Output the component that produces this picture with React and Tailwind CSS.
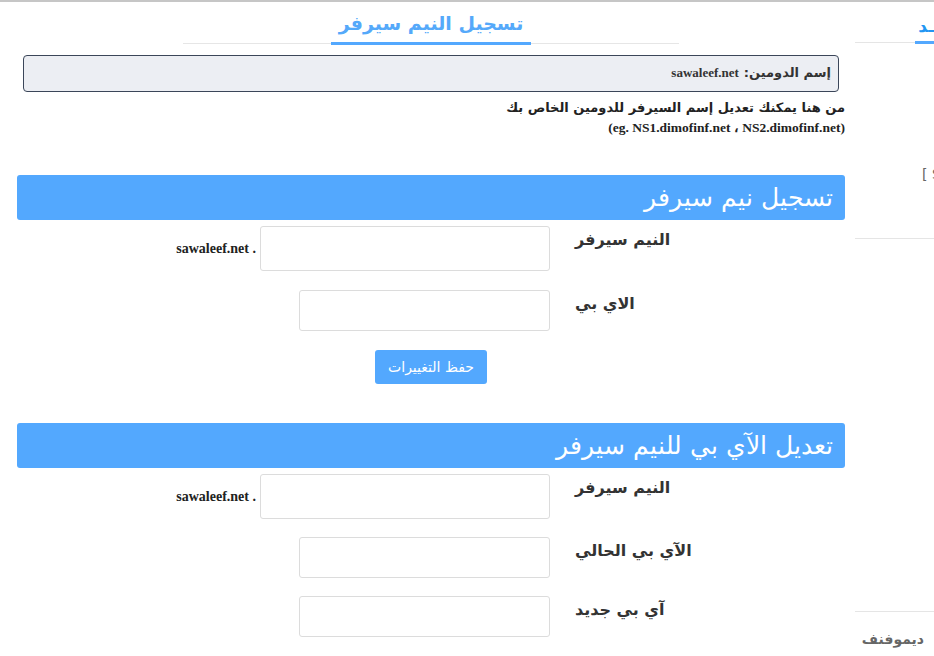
import React from "react";

const arabic = "font-['DejaVu_Sans',sans-serif]";
const serif = "font-['Liberation_Serif',serif]";

function SectionHeader({ title }) {
  return (
    <div className={`h-[45px] bg-[#53a8fe] rounded-[3px] flex items-center pr-[12px] text-white text-[25px] ${arabic} font-light`}>
      {title}
    </div>
  );
}

function Row({ label, wide, suffix, tall }) {
  return (
    <div className="flex items-start">
      <div className={`w-[270px] pt-[2px] text-left text-[16px] font-bold text-[#333] whitespace-nowrap ${arabic}`}>
        {label}
      </div>
      <div className="flex items-center mr-[25px]">
        <input
          type="text"
          className={`${wide ? "w-[290px]" : "w-[251px]"} ${tall ? "h-[45px]" : "h-[41px]"} border border-[#dcdcdc] rounded-[3px] bg-white`}
        />
        {suffix && (
          <span className={`mr-[4px] text-[14px] font-bold text-[#222] ${serif}`} dir="ltr">
            {suffix} .
          </span>
        )}
      </div>
    </div>
  );
}

function Sidebar() {
  return (
    <aside className="w-[79px] shrink-0 overflow-hidden flex flex-col" dir="ltr">
      <div className="h-[41px] border-b border-[#e5e5e5] relative pl-[60px] pt-[12px]">
        <span className={`block text-[17px] font-bold text-[#2196f3] ${arabic} whitespace-nowrap`} dir="rtl">
          ـد
        </span>
        <div className="absolute left-[60px] bottom-[-2px] w-[30px] h-[3px] bg-[#53a8fe]" />
      </div>
      <div className="h-[196px] border-b border-[#e5e5e5] pl-[67px] pt-[118px]">
        <span className={`text-[14px] text-[#666] ${arabic} whitespace-nowrap`}>[ S</span>
      </div>
      <div className="h-[373px] border-b border-[#e5e5e5]" />
      <div className={`pt-[17px] pr-[10px] text-right text-[14px] font-bold text-[#666] ${arabic}`} dir="rtl">
        ديموفنف
      </div>
    </aside>
  );
}

export default function App() {
  return (
    <div dir="rtl" className="w-[934px] h-[656px] overflow-hidden bg-white border-t-2 border-[#c6c6c6] flex">
      <Sidebar />
      <main className="w-[855px] shrink-0 pr-[10px] pl-[17px]">
        <div className="flex justify-center pt-[7px]">
          <div className="w-[496px] border-b border-[#e6e6e6] flex justify-center">
            <span className={`w-[200px] text-center border-b-[3px] border-[#53a8fe] -mb-[2px] pb-[4px] text-[19px] font-bold text-[#55a9fa] ${arabic}`}>
              تسجيل النيم سيرفر
            </span>
          </div>
        </div>

        <div className="mx-[6px] mt-[11px] h-[37px] border border-[#3b4659] rounded-[4px] bg-[#eceef3] flex items-center pr-[7px]">
          <span className={`text-[13px] font-bold text-[#333] ${arabic}`}>إسم الدومين: </span>
          <span className={`mr-[5px] text-[13px] font-bold text-[#333] ${serif}`}>sawaleef.net</span>
        </div>

        <div className={`mt-[6px] text-[13px] font-bold text-[#222] ${arabic}`}>
          من هنا يمكنك تعديل إسم السيرفر للدومين الخاص بك
        </div>
        <div className={`mt-[1px] text-[13.5px] font-bold text-[#222] ${serif}`}>
          (eg. NS1.dimofinf.net ، NS2.dimofinf.net)
        </div>

        <div className="mt-[37px]">
          <SectionHeader title="تسجيل نيم سيرفر" />
          <div className="mt-[6px] flex flex-col gap-[19px]">
            <Row label="النيم سيرفر" wide tall suffix="sawaleef.net" />
            <Row label="الاي بي" />
          </div>
          <div className="flex justify-center mt-[19px]">
            <button className={`w-[112px] h-[34px] bg-[#53a8fe] rounded-[3px] text-white text-[14px] ${arabic}`}>
              حفظ التغييرات
            </button>
          </div>
        </div>

        <div className="mt-[39px]">
          <SectionHeader title="تعديل الآي بي للنيم سيرفر" />
          <div className="mt-[6px] flex flex-col gap-[18px]">
            <Row label="النيم سيرفر" wide tall suffix="sawaleef.net" />
            <Row label="الآي بي الحالي" />
            <Row label="آي بي جديد" />
          </div>
        </div>
      </main>
    </div>
  );
}
